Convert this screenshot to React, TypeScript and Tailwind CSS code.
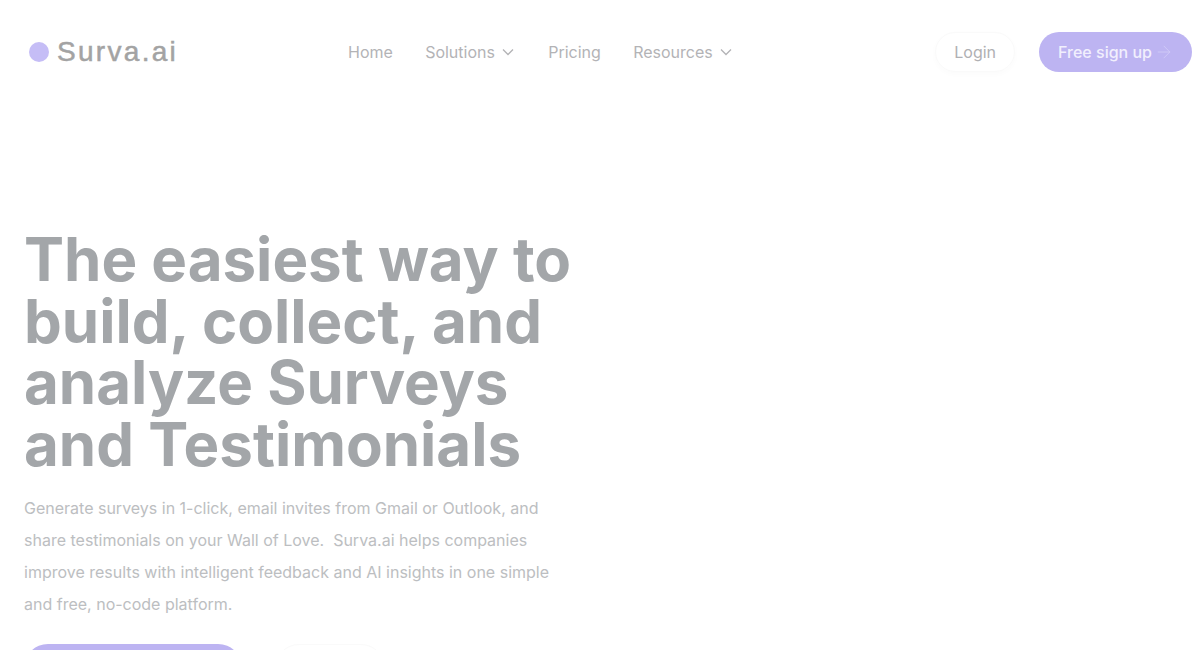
import React from 'react';
import { ArrowRight } from 'lucide-react';

const navItems = [
  { label: 'Home', menu: false },
  { label: 'Solutions', menu: true },
  { label: 'Pricing', menu: false },
  { label: 'Resources', menu: true },
];

const App: React.FC = () => {
  return (
    <div className="h-[650px] w-[1200px] overflow-hidden bg-white font-['Inter',sans-serif]">
      <header className="flex h-[104px] items-center pl-[29px] pr-2">
        <a className="flex w-[319px] items-center gap-2">
          <span className="h-5 w-5 rounded-full bg-[#c5bdf6]" />
          <span className="font-['Liberation_Sans',sans-serif] text-[28px] font-normal tracking-[2.3px] text-[#a3a3a3] [-webkit-text-stroke:0.5px_#a3a3a3]">
            Surva.ai
          </span>
        </a>
        <nav className="flex items-center gap-[32.3px]">
          {navItems.map((item) => (
            <a key={item.label} className="flex items-center gap-[5px] text-base text-[#b3b3b6]">
              {item.label}
              {item.menu && (
                <svg viewBox="0 0 16 16" className="h-4 w-4" fill="none" stroke="currentColor" strokeWidth={1.3}>
                  <path d="M3 5.5l5 5 5-5" />
                </svg>
              )}
            </a>
          ))}
        </nav>
        <div className="ml-auto flex items-center gap-6">
          <button className="h-10 rounded-full border border-[#fafafa] px-[18px] text-base text-[#b0b0b3] shadow-[0_2px_6px_rgba(0,0,0,0.02)]">
            Login
          </button>
          <button className="flex h-10 items-center gap-[2px] rounded-full bg-[#bdb4f2] pl-[19px] pr-[18px] text-base font-medium text-[#f1effd]">
            Free sign up
            <ArrowRight className="h-5 w-5 text-[#d3cdf8]" strokeWidth={1} />
          </button>
        </div>
      </header>
      <main className="px-6 pt-[125px]">
        <h1 className="w-[570px] text-[60px] leading-[61.6px] font-bold text-[#a3a6a9]">
          The easiest way to build, collect, and analyze Surveys and Testimonials
        </h1>
        <p className="mt-[17px] w-[540px] text-base leading-8 text-[#bcbec1]">
          Generate surveys in 1-click, email invites from Gmail or Outlook, and share testimonials on your Wall of Love.&nbsp; Surva.ai helps companies improve results with intelligent feedback and AI insights in one simple and free, no-code platform.
        </p>
        <div className="mt-6 flex items-center gap-[33px]">
          <button className="h-12 w-[218px] rounded-full bg-[#bdb4f2]" />
          <button className="h-12 w-[110px] rounded-full border border-[#fafafa]" />
        </div>
      </main>
    </div>
  );
};

export default App;
